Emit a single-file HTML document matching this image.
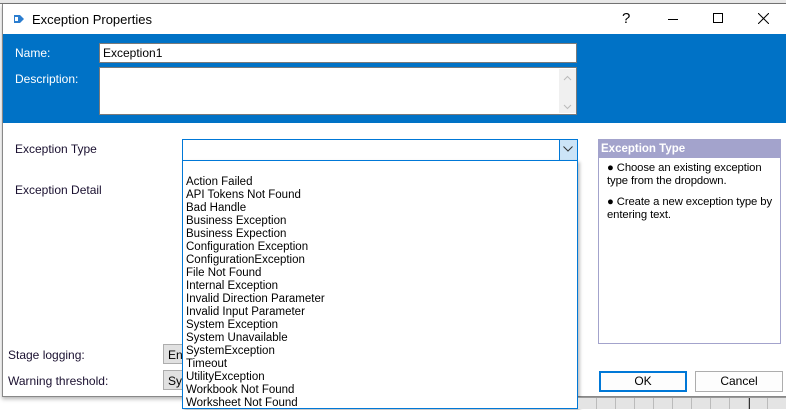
<!DOCTYPE html>
<html><head><style>
*{margin:0;padding:0;box-sizing:border-box}
body{width:786px;height:409px;overflow:hidden;background:#fff;position:relative;font-family:"Liberation Sans",Arial,sans-serif;font-size:12px;color:#000}
.a{position:absolute}
.lbl{color:#1a1030}
.item{position:absolute;left:3px;font-size:11.5px;line-height:13px;color:#000;white-space:nowrap}
</style></head><body>
<div class="a" style="left:0;top:0;width:786px;height:4px;background:#e8e8e8;border-bottom:1px solid #777"></div>
<div class="a" style="left:2px;top:4px;width:784px;height:393px;background:#fff;border-left:1px solid #888;border-bottom:1px solid #888;box-shadow:0 2px 4px rgba(0,0,0,.3)"></div>
<svg class="a" style="left:12px;top:13px" width="14" height="12"><path d="M2 2h6l4 4-4 4H2z" fill="#2b7dcf"/><rect x="3" y="4" width="3" height="4" fill="#fff"/></svg>
<div class="a" style="left:32px;top:12px;font-size:13px">Exception Properties</div>
<div class="a" style="left:622px;top:10px;font-size:15px">?</div>
<div class="a" style="left:668px;top:19px;width:10px;height:1px;background:#000"></div>
<div class="a" style="left:713px;top:13px;width:10px;height:10px;border:1px solid #000"></div>
<svg class="a" style="left:758px;top:13px" width="11" height="11"><path d="M0 0L11 11M11 0L0 11" stroke="#000" stroke-width="1"/></svg>
<div class="a" style="left:3px;top:34px;width:783px;height:89px;background:#0072c6"></div>
<div class="a" style="left:15px;top:46px;color:#fff">Name:</div>
<div class="a" style="left:15px;top:72px;color:#fff">Description:</div>
<div class="a" style="left:99px;top:43px;width:478px;height:20px;background:#fff;border:1px solid #7a7a7a;padding:2px 3px">Exception1</div>
<div class="a" style="left:99px;top:67px;width:478px;height:48px;background:#fff;border:1px solid #7a7a7a"></div>
<div class="a" style="left:559px;top:69px;width:17px;height:44px;background:#f0f0f0"></div>
<svg class="a" style="left:563px;top:75px" width="9" height="36"><path d="M1 5L4.5 1.5L8 5M1 30L4.5 33.5L8 30" stroke="#bbb" fill="none"/></svg>
<div class="a lbl" style="left:15px;top:142px">Exception Type</div>
<div class="a lbl" style="left:15px;top:183px">Exception Detail</div>
<div class="a lbl" style="left:8px;top:348px">Stage logging:</div>
<div class="a lbl" style="left:8px;top:374px">Warning threshold:</div>
<div class="a" style="left:163px;top:344px;width:30px;height:20px;background:#e1e1e1;border:1px solid #adadad;padding:3px 4px">Ena</div>
<div class="a" style="left:163px;top:370px;width:30px;height:20px;background:#e1e1e1;border:1px solid #adadad;padding:3px 4px">Sys</div>
<div class="a" style="left:182px;top:139px;width:396px;height:22px;background:#fff;border:1px solid #0078d7"></div>
<div class="a" style="left:559px;top:140px;width:18px;height:20px;background:#cce4f7;border-left:1px solid #0078d7"></div>
<svg class="a" style="left:563px;top:146px" width="10" height="6"><path d="M0.5 0.5L5 5L9.5 0.5" stroke="#333" fill="none"/></svg>
<div class="a" style="left:182px;top:160px;width:396px;height:249px;background:#fff;border:1px solid #0078d7;box-shadow:2px 2px 3px rgba(0,0,0,.25)">
<div class="item" style="top:15px">Action Failed</div>
<div class="item" style="top:28px">API Tokens Not Found</div>
<div class="item" style="top:41px">Bad Handle</div>
<div class="item" style="top:54px">Business Exception</div>
<div class="item" style="top:67px">Business Expection</div>
<div class="item" style="top:80px">Configuration Exception</div>
<div class="item" style="top:93px">ConfigurationException</div>
<div class="item" style="top:106px">File Not Found</div>
<div class="item" style="top:119px">Internal Exception</div>
<div class="item" style="top:132px">Invalid Direction Parameter</div>
<div class="item" style="top:145px">Invalid Input Parameter</div>
<div class="item" style="top:158px">System Exception</div>
<div class="item" style="top:171px">System Unavailable</div>
<div class="item" style="top:184px">SystemException</div>
<div class="item" style="top:197px">Timeout</div>
<div class="item" style="top:210px">UtilityException</div>
<div class="item" style="top:223px">Workbook Not Found</div>
<div class="item" style="top:236px">Worksheet Not Found</div>
</div>
<div class="a" style="left:598px;top:139px;width:183px;height:205px;border:1px solid #a3a3cc;background:#fff">
<div style="background:#a3a3cc;color:#fff;font-weight:bold;height:18px;padding:3px 2px;font-size:11.5px">Exception Type</div>
<div style="padding:4px 2px 4px 8px;font-size:11.3px;line-height:13px;letter-spacing:-0.1px">● Choose an existing exception type from the dropdown.<br><div style="height:8px"></div>● Create a new exception type by entering text.</div>
</div>
<div class="a" style="left:599px;top:371px;width:88px;height:21px;border:2px solid #0078d7;background:#fdfdfd;text-align:center;line-height:17px">OK</div>
<div class="a" style="left:695px;top:371px;width:88px;height:21px;border:1px solid #adadad;background:#fdfdfd;text-align:center;line-height:19px">Cancel</div>
<div class="a" style="left:578px;top:397px;width:208px;height:12px;background:#e4e4e4;border-top:1px solid #999;background-image:repeating-linear-gradient(90deg,transparent 0 18px,#bbb 18px 19px)"></div>
<div class="a" style="left:749px;top:398px;width:1px;height:11px;background:#333"></div>
</body></html>
